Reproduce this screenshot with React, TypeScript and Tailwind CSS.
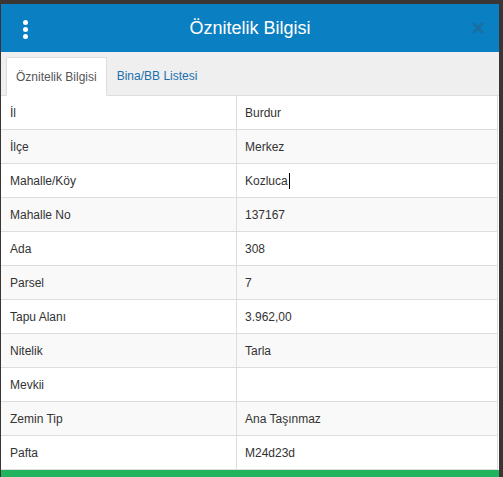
import React from 'react';

const rows: [string, string][] = [
  ['İl', 'Burdur'],
  ['İlçe', 'Merkez'],
  ['Mahalle/Köy', 'Kozluca'],
  ['Mahalle No', '137167'],
  ['Ada', '308'],
  ['Parsel', '7'],
  ['Tapu Alanı', '3.962,00'],
  ['Nitelik', 'Tarla'],
  ['Mevkii', ''],
  ['Zemin Tip', 'Ana Taşınmaz'],
  ['Pafta', 'M24d23d'],
];

export default function App() {
  return (
    <div className="w-[503px] h-[477px] bg-[#3b3634] overflow-hidden flex font-['Liberation_Sans',Arial,sans-serif]">
      <div className="ml-[1px] mt-[4px] w-[498px] bg-white flex flex-col">
        {/* header */}
        <div className="relative h-[48px] bg-[#0a7fc1] flex items-center justify-center shrink-0">
          <div className="absolute left-[22px] top-[16px] flex flex-col gap-[2px]">
            <span className="w-[5px] h-[5px] rounded-full bg-white" />
            <span className="w-[5px] h-[5px] rounded-full bg-white" />
            <span className="w-[5px] h-[5px] rounded-full bg-white" />
          </div>
          <h1 className="text-white text-[18px] leading-none">Öznitelik Bilgisi</h1>
          <svg className="absolute right-[15px] top-[18px]" width="12" height="12" viewBox="0 0 12 12">
            <path d="M2 2 L10 10 M10 2 L2 10" stroke="#1d6a98" strokeWidth="3" strokeLinecap="round" opacity="0.75" />
          </svg>
        </div>

        {/* tabs */}
        <div className="h-[44px] bg-[#efefef] flex items-end pl-[5px] shrink-0 border-b border-[#ddd]">
          <div className="h-[39px] -mb-px bg-white border border-[#ddd] border-b-white rounded-t-[2px] px-[9px] flex items-center text-[12px] text-[#555]">
            Öznitelik Bilgisi
          </div>
          <div className="h-[39px] px-[10px] flex items-center text-[12px] text-[#1b6fad]">Bina/BB Listesi</div>
        </div>

        {/* table */}
        <div className="flex flex-col border-r border-[#ddd] mr-[1px]">
          {rows.map(([k, v], i) => (
            <div
              key={k}
              className={`h-[34px] flex border-b border-[#ddd] text-[12px] text-[#333] ${i % 2 === 1 ? 'bg-[#f9f9f9]' : 'bg-white'}`}
            >
              <div className="w-[236px] shrink-0 border-r border-[#ddd] pl-[9px] flex items-center">{k}</div>
              <div className="pl-[8px] flex items-center">
                {v}
                {k === 'Mahalle/Köy' && <span className="inline-block w-px h-[16px] bg-black ml-px" />}
              </div>
            </div>
          ))}
        </div>
        <div className="flex-1 bg-[#22b35e]" />
      </div>
    </div>
  );
}
